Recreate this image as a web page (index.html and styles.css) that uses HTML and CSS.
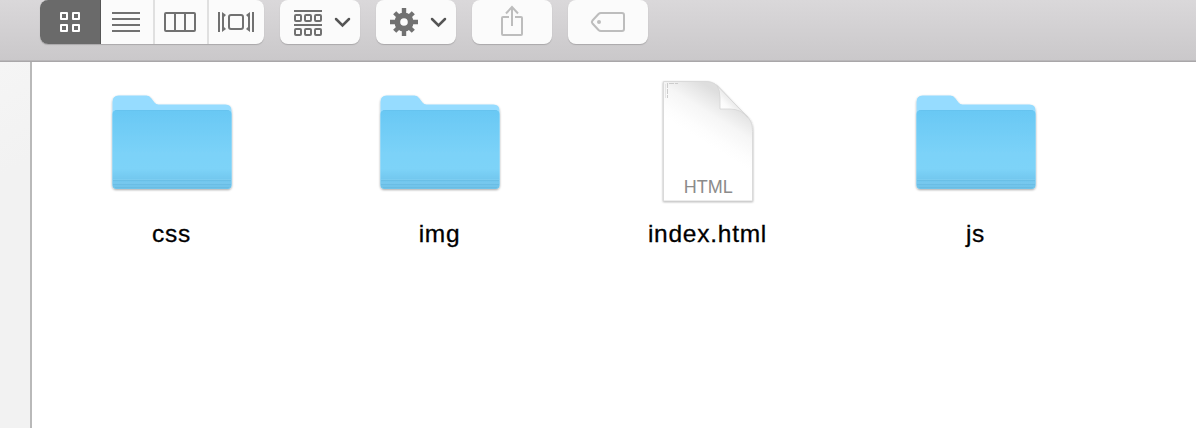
FILE: index.html
```
<!DOCTYPE html>
<html lang="en">
<head>
<meta charset="utf-8">
<title>Finder</title>
<link rel="stylesheet" href="styles.css">
</head>
<body>
<svg class="defs" width="0" height="0" aria-hidden="true">
  <defs>
    <linearGradient id="front" x1="0" y1="0" x2="0" y2="1">
      <stop offset="0" stop-color="#69c8f4"/><stop offset=".55" stop-color="#7bd2f8"/><stop offset=".74" stop-color="#7dd3f8"/><stop offset=".87" stop-color="#73c8ef"/><stop offset="1" stop-color="#71c3e9"/>
    </linearGradient>
    <linearGradient id="curl" gradientUnits="userSpaceOnUse" x1="82" y1="30" x2="92" y2="20">
      <stop offset="0" stop-color="#fff"/><stop offset=".55" stop-color="#fbfbfb"/><stop offset="1" stop-color="#ececec"/>
    </linearGradient>
    <linearGradient id="paper" gradientUnits="userSpaceOnUse" x1="92" y1="20" x2="66" y2="62">
      <stop offset="0" stop-color="#dedede"/><stop offset=".2" stop-color="#e9e9e9"/><stop offset=".45" stop-color="#f6f6f6"/><stop offset=".8" stop-color="#fdfdfd"/><stop offset="1" stop-color="#fff"/>
    </linearGradient>
    <filter id="shadow" x="-10%" y="-10%" width="120%" height="120%">
      <feDropShadow dx="0" dy="1" stdDeviation="1.2" flood-color="#000" flood-opacity=".34"/>
    </filter>
    <symbol id="folder" viewBox="0 0 140 130">
      <g filter="url(#shadow)">
        <path d="M10.500 22q0-6.500 6-6.500h28q3 0 5 3l3 4q1.500 2 4 2h67q6 0 6 6v74q0 4-4 4H14.500q-4 0-4-4z" fill="#96dcff"/>
        <path d="M10.500 34q0-4 5-4h109q5 0 5 4v71q0 4-4 4H14.500q-4 0-4-4z" fill="url(#front)"/>
      </g>
      <path d="M13 30.500h114" stroke="#61bce9" stroke-opacity=".4"/>
      <path d="M11 100.500h118M11 104.500h118M13 107.500h114" stroke="#59acd4" stroke-opacity=".3"/>
      <path d="M11 99.500h118M11 103h118" stroke="#8ad4f5" stroke-opacity=".4"/>
    </symbol>
  </defs>
</svg>
<header class="toolbar">
  <div class="group views">
    <button class="seg seg-active" aria-label="Icons"><svg viewBox="40 0 61 44"><path d="M61 13h6v6h-6zM73 13h6v6h-6zM61 25h6v6h-6zM73 25h6v6h-6z"/></svg></button>
    <button class="seg" aria-label="List"><svg viewBox="101 0 52 44"><path d="M112 13h28M112 19h28M112 25h28M112 31h28"/></svg></button>
    <button class="seg seg-split" aria-label="Columns"><svg viewBox="155 0 52 44"><rect x="165" y="13" width="30" height="18" rx="1"/><path d="M175 13v18M185 13v18"/></svg></button>
    <button class="seg seg-split seg-last" aria-label="Cover Flow"><svg viewBox="209 0 55 44"><path d="M219 12v20M253 12v20"/><path d="M222 12l4 3-2 2v10l2 2-4 3zM250 12l-4 3 2 2v10l-2 2 4 3z" class="solid"/><rect x="229" y="15" width="14" height="14" rx="2"/></svg></button>
  </div>
  <button class="group" aria-label="Arrange"><svg viewBox="280 0 80 44"><path d="M294 11h28M294 25h28"/><g><rect x="295" y="15" width="6" height="6" rx="1"/><rect x="305" y="15" width="6" height="6" rx="1"/><rect x="315" y="15" width="6" height="6" rx="1"/><rect x="295" y="29" width="6" height="6" rx="1"/><rect x="305" y="29" width="6" height="6" rx="1"/><rect x="315" y="29" width="6" height="6" rx="1"/></g><path class="chevron" d="M336 19l6.500 6.500L349 19"/></svg></button>
  <button class="group" aria-label="Action"><svg viewBox="376 0 80 44"><circle cx="404" cy="22" r="6.700" stroke-width="5.800"/><path stroke-width="4.400" d="M404 8v5M404 31v5M390 22h5M413 22h5M394.700 12.700l3.600 3.600M409.700 27.700l3.600 3.600M394.700 31.300l3.600-3.600M409.700 16.300l3.600-3.600"/><path class="chevron" d="M432 19l6.500 6.500L445 19"/></svg></button>
  <button class="group disabled" aria-label="Share"><svg viewBox="472 0 80 44"><path d="M509 17h-6q-1 0-1 1v16q0 1 1 1h18q1 0 1-1V18q0-1-1-1h-6M512 26V7.500M506 13.500l6-6.500 6 6.500"/></svg></button>
  <button class="group disabled" aria-label="Tags"><svg viewBox="568 0 80 44"><path d="M601 13h21q2 0 2 2v14q0 2-2 2h-21q-1.500 0-2.500-1l-6-6.500q-1.300-1.500 0-3l6-6.500q1-1 2.500-1z"/><circle class="solid" cx="599" cy="22" r="2"/></svg></button>
</header>
<div class="window">
  <aside class="sidebar"></aside>
  <main class="files">
    <figure class="file"><svg class="icon" viewBox="0 0 140 130"><use href="#folder"/></svg><figcaption>css</figcaption></figure>
    <figure class="file"><svg class="icon" viewBox="0 0 140 130"><use href="#folder"/></svg><figcaption>img</figcaption></figure>
    <figure class="file"><svg class="icon" viewBox="0 0 140 130">
      <g filter="url(#shadow)"><path d="M25 1h41c6 0 9 1 13 4l31 32c4 4 5 8 5 14v70H25z" fill="url(#paper)"/></g>
      <path d="M25.500 1.500H66c6 0 9 1 13 4l31 32c3.500 4 4.500 8 4.500 14v69.500h-89z" fill="none" stroke="#dadada"/>
      <path d="M79 5.500q3 5 3 12V29h10q11 0 18 8.500z" fill="url(#curl)" stroke="#d4d4d4" stroke-width=".8"/>
      <path d="M29.500 3v15M31 3.500h9" stroke="#ccc" stroke-dasharray="5 1" fill="none"/><path d="M27.500 4v14" stroke="#e6e6e6"/>
      <text x="70.300" y="113" class="kind" textLength="49" lengthAdjust="spacingAndGlyphs">HTML</text>
    </svg><figcaption>index.html</figcaption></figure>
    <figure class="file"><svg class="icon" viewBox="0 0 140 130"><use href="#folder"/></svg><figcaption>js</figcaption></figure>
  </main>
</div>
</body>
</html>
```
FILE: styles.css
```
* { box-sizing: border-box; }
body {
  margin: 0;
  height: 428px;
  display: flex;
  flex-direction: column;
  overflow: hidden;
  background: #fff;
  font-family: "Helvetica Neue", "Liberation Sans", Arial, sans-serif;
}
.defs { position: absolute; }
.toolbar {
  flex: none;
  height: 62px;
  display: flex;
  align-items: flex-start;
  gap: 16px;
  padding-left: 40px;
  background: linear-gradient(#dad8da, #cac8ca);
  border-bottom: 1px solid #a9a7a9;
  box-shadow: inset 0 -1px #b9b7b9;
}
button { border: 0; padding: 0; margin: 0; background: none; }
.group {
  width: 80px;
  height: 44px;
  display: flex;
  border-radius: 8px;
  background: #fbfbfb;
  box-shadow: 0 1px 1px #aaa8aa;
}
.views { width: 224px; }
.seg { width: 52px; height: 44px; }
.seg-active {
  width: 61px;
  background: #6a6a6a;
  border-radius: 8px 0 0 8px;
  box-shadow: inset -1px 0 #555;
}
.seg-split { width: 54px; border-left: 2px solid #e0e0e0; }
.seg-last { width: 57px; }
.toolbar svg {
  display: block;
  width: 100%;
  height: 44px;
  fill: none;
  stroke: #717171;
  stroke-width: 2;
}
.toolbar .seg-active svg { stroke: #fff; stroke-linejoin: round; }
.toolbar .disabled svg { stroke: #bdbdbd; }
.toolbar .solid { fill: #717171; stroke: none; }
.toolbar .disabled .solid { fill: #bdbdbd; }
.toolbar .chevron { stroke: #555; stroke-width: 2.5; stroke-linecap: round; }
.window { flex: 1; display: flex; }
.sidebar {
  width: 32px;
  background: linear-gradient(150deg, #f5f5f5, #f2f2f2 30%);
  border-right: 2px solid #b9b9b9;
}
.files {
  flex: 1;
  display: grid;
  grid-template-columns: repeat(4, 268px);
  align-items: start;
  padding: 18px 0 0 6px;
}
.file {
  margin: 0;
  display: flex;
  flex-direction: column;
  align-items: center;
}
.icon { width: 140px; height: 130px; display: block; }
.kind { font-size: 18px; fill: #8b8b8b; text-anchor: middle; }
figcaption {
  margin-top: 9px;
  margin-right: 1px;
  font-size: 24.500px;
  line-height: 30px;
  letter-spacing: .75px;
  color: #000;
  -webkit-text-stroke: .3px #000;
}
```
